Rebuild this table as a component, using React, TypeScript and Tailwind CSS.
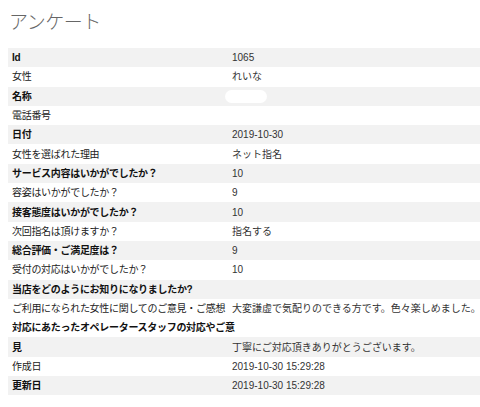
const rows: { label: string; value?: string; bold: boolean; gray: boolean; blank?: boolean }[] = [
  { label: "Id", value: "1065", bold: true, gray: true },
  { label: "女性", value: "れいな", bold: false, gray: false },
  { label: "名称", value: "", bold: true, gray: true, blank: true },
  { label: "電話番号", value: "", bold: false, gray: false },
  { label: "日付", value: "2019-10-30", bold: true, gray: true },
  { label: "女性を選ばれた理由", value: "ネット指名", bold: false, gray: false },
  { label: "サービス内容はいかがでしたか？", value: "10", bold: true, gray: true },
  { label: "容姿はいかがでしたか？", value: "9", bold: false, gray: false },
  { label: "接客態度はいかがでしたか？", value: "10", bold: true, gray: true },
  { label: "次回指名は頂けますか？", value: "指名する", bold: false, gray: false },
  { label: "総合評価・ご満足度は？", value: "9", bold: true, gray: true },
  { label: "受付の対応はいかがでしたか？", value: "10", bold: false, gray: false },
  { label: "当店をどのようにお知りになりましたか?", value: "", bold: true, gray: true },
  { label: "ご利用になられた女性に関してのご意見・ご感想", value: "大変謙虚で気配りのできる方です。色々楽しめました。", bold: false, gray: false },
  { label: "対応にあたったオペレータースタッフの対応やご意", bold: true, gray: false },
  { label: "見", value: "丁寧にご対応頂きありがとうございます。", bold: true, gray: true },
  { label: "作成日", value: "2019-10-30 15:29:28", bold: false, gray: false },
  { label: "更新日", value: "2019-10-30 15:29:28", bold: true, gray: true },
];

export default function App() {
  return (
    <div
      className="w-[480px] h-[407px] bg-white overflow-hidden"
      style={{ fontFamily: '"Liberation Sans", "Noto Sans CJK JP", sans-serif' }}
    >
      <h1 className="pl-[9px] pt-[9px] h-[48px] text-[19px] leading-[28px] font-light text-[#666] tracking-[-0.5px]">
        アンケート
      </h1>
      <div className="pl-2">
        {rows.map((r, i) => (
          <div
            key={i}
            className={`flex items-center h-[19.3px] text-[10px] tracking-[-0.3px] whitespace-nowrap ${r.gray ? "bg-[#f2f2f2]" : "bg-white"}`}
          >
            <div
              className={`w-[224px] shrink-0 pl-1 ${r.bold ? "font-bold text-[#111]" : "text-[#222]"}`}
            >
              {r.label}
            </div>
            <div className="pl-0 text-[#333] tracking-normal">
              {r.blank ? (
                <span className="block w-[42px] h-[13px] -ml-[7px] rounded-full bg-white" />
              ) : (
                r.value
              )}
            </div>
          </div>
        ))}
      </div>
    </div>
  );
}
